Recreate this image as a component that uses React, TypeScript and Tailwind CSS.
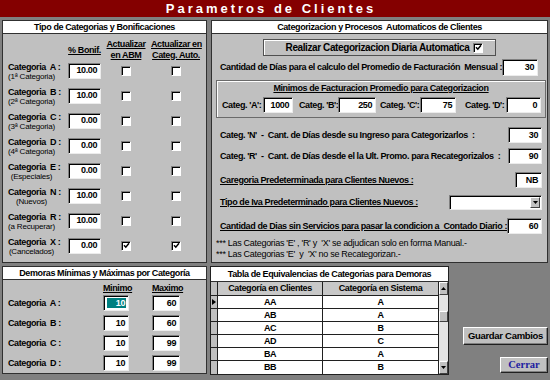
import React from "react";

const categorias = [
  { letra: "A", sub: "(1ª Categoria)", bonif: "10.00", abm: false, auto: false },
  { letra: "B", sub: "(2ª Categoria)", bonif: "10.00", abm: false, auto: false },
  { letra: "C", sub: "(3ª Categoria)", bonif: "0.00", abm: false, auto: false },
  { letra: "D", sub: "(4ª Categoria)", bonif: "0.00", abm: false, auto: false },
  { letra: "E", sub: "(Especiales)", bonif: "0.00", abm: false, auto: false },
  { letra: "N", sub: "(Nuevos)", bonif: "10.00", abm: false, auto: false },
  { letra: "R", sub: "(a Recuperar)", bonif: "10.00", abm: false, auto: false },
  { letra: "X", sub: "(Cancelados)", bonif: "0.00", abm: true, auto: true },
];

const demoras = [
  { letra: "A", min: "10", max: "60" },
  { letra: "B", min: "10", max: "60" },
  { letra: "C", min: "10", max: "99" },
  { letra: "D", min: "10", max: "99" },
];

const equivalencias = [
  ["AA", "A"],
  ["AB", "A"],
  ["AC", "B"],
  ["AD", "C"],
  ["BA", "A"],
  ["BB", "B"],
];

const Box = ({ value, className = "" }: { value?: string; className?: string }) => (
  <div
    className={`flex items-center justify-end bg-white border border-t-[#808080] border-l-[#808080] border-r-[#ececec] border-b-[#ececec] shadow-[inset_1px_1px_0_#000] pr-[3px] font-bold leading-none ${className}`}
  >
    {value}
  </div>
);

const Check = ({ checked }: { checked?: boolean }) => (
  <div className="w-[10px] h-[10px] bg-white border border-t-[#808080] border-l-[#808080] border-r-white border-b-white shadow-[inset_1px_1px_0_#000] flex items-center justify-center">
    {checked && (
      <svg width="7" height="7" viewBox="0 0 7 7">
        <path d="M1 3.2 L2.8 5.2 L6 1.2" stroke="#000" strokeWidth="1.5" fill="none" />
      </svg>
    )}
  </div>
);

const PanelHeader = ({ children, className = "h-[13px]" }: { children: React.ReactNode; className?: string }) => (
  <div className={`bg-white border-b border-[#303030] flex items-center justify-center font-bold leading-none whitespace-pre ${className}`}>
    {children}
  </div>
);

export default function App() {
  return (
    <div className="w-[550px] h-[380px] bg-[#808080] overflow-hidden text-black text-[9px] tracking-[-0.4px] font-['Liberation_Sans',Arial,sans-serif]">
      {/* Barra de titulo */}
      <div className="h-[17px] bg-[#840000] flex items-center justify-center pr-[8px]">
        <span className="text-white font-bold text-[13px] tracking-[3px] leading-none">Parametros de Clientes</span>
      </div>

      <div className="flex gap-[4px] pt-[3px] pl-[2px]">
        {/* Tipo de Categorias */}
        <section className="w-[205px] h-[243px] bg-[#c0c0c0] border border-[#303030] flex flex-col">
          <PanelHeader>Tipo de Categorias y Bonificaciones</PanelHeader>
          <div className="flex h-[24px] pt-[5px] font-bold leading-[10.5px] whitespace-nowrap">
            <div className="w-[63px]" />
            <div className="w-[33px] ml-[2px] text-center underline mt-[6px]">% Bonif.</div>
            <div className="w-[50px] text-center underline">
              Actualizar
              <br />
              en ABM
            </div>
            <div className="w-[50px] text-center underline">
              Actualizar en
              <br />
              Categ. Auto.
            </div>
          </div>
          {categorias.map((c) => (
            <div key={c.letra} className="flex items-center h-[25px]">
              <div className="w-[63px] pl-[5px] pt-[2px]">
                <div className="font-bold leading-[10px] whitespace-pre">{`Categoria  ${c.letra} :`}</div>
                <div className="w-[47px] text-center text-[8px] tracking-[-0.2px] leading-[9px] whitespace-nowrap">{c.sub}</div>
              </div>
              <Box value={c.bonif} className="w-[33px] h-[16px] ml-[2px]" />
              <div className="w-[50px] flex justify-center">
                <Check checked={c.abm} />
              </div>
              <div className="w-[50px] flex justify-center">
                <Check checked={c.auto} />
              </div>
            </div>
          ))}
        </section>

        {/* Categorizacion y procesos */}
        <section className="w-[337px] h-[243px] bg-[#c0c0c0] border border-[#303030] flex flex-col font-bold leading-none whitespace-nowrap">
          <PanelHeader>Categorizacion y Procesos  Automaticos de Clientes</PanelHeader>

          <div className="self-center w-[233px] h-[17px] mt-[5px] border border-[#505050] shadow-[inset_1px_1px_0_#fff] flex items-center justify-center gap-[4px] pl-[10px] text-[10px]">
            <span>Realizar Categorizacion Diaria Automatica</span>
            <Check checked />
          </div>

          <div className="flex items-center justify-between h-[17px] mt-[3px] pl-[8px] pr-[9px]">
            <span className="whitespace-pre">Cantidad de Días para el calculo del Promedio de Facturación  Mensual :</span>
            <Box value="30" className="w-[36px] h-[17px]" />
          </div>

          <div className="h-[38px] mt-[4px] ml-[4px] mr-[1px] border border-[#6a6a6a] shadow-[inset_1px_1px_0_#fff] flex flex-col">
            <div className="text-center underline leading-[10px] pt-[2px]">Minimos de Facturacion Promedio para Categorizacion</div>
            <div className="flex items-center h-[16px] mt-[4px] pl-[5px]">
              <span className="w-[40px]">Categ. 'A':</span>
              <Box value="1000" className="w-[30px] h-[16px] ml-[1px]" />
              <span className="w-[39px] ml-[6px]">Categ. 'B':</span>
              <Box value="250" className="w-[38px] h-[16px]" />
              <span className="w-[40px] ml-[4px]">Categ. 'C':</span>
              <Box value="75" className="w-[36px] h-[16px]" />
              <span className="w-[40px] ml-[9px]">Categ. 'D':</span>
              <Box value="0" className="w-[35px] h-[16px] ml-[1px]" />
            </div>
          </div>

          <div className="flex items-center justify-between h-[16px] mt-[9px] pl-[8px] pr-[5px]">
            <span className="whitespace-pre">Categ. 'N'  -  Cant. de Días desde su Ingreso para Categorizarlos  :</span>
            <Box value="30" className="w-[34px] h-[16px]" />
          </div>
          <div className="flex items-center justify-between h-[16px] mt-[5px] pl-[8px] pr-[5px]">
            <span className="whitespace-pre">Categ. 'R'  -  Cant. de Días desde el la Ult. Promo. para Recategorizalos  :</span>
            <Box value="90" className="w-[34px] h-[16px]" />
          </div>
          <div className="flex items-center justify-between h-[16px] mt-[8px] pl-[8px] pr-[5px]">
            <span className="underline">Caregoria Predeterminada para Clientes Nuevos :</span>
            <Box value="NB" className="w-[27px] h-[16px]" />
          </div>
          <div className="flex items-center justify-between h-[15px] mt-[7px] pl-[8px] pr-[5px]">
            <span className="underline">Tipo de Iva Predeterminado para Clientes Nuevos :</span>
            <div className="w-[93px] h-[15px] bg-white border border-t-[#808080] border-l-[#808080] border-r-[#ececec] border-b-[#ececec] shadow-[inset_1px_1px_0_#000] flex justify-end p-[1px]">
              <div className="w-[10px] h-full bg-[#c0c0c0] border border-t-white border-l-white border-r-[#404040] border-b-[#404040] flex items-center justify-center">
                <svg width="5" height="3" viewBox="0 0 5 3">
                  <path d="M0 0 H5 L2.5 3 Z" fill="#000" />
                </svg>
              </div>
            </div>
          </div>
          <div className="flex items-center justify-between h-[16px] mt-[8px] pl-[8px] pr-[5px]">
            <span className="underline whitespace-pre">Cantidad de Dias sin Servicios para pasar la condicion a  Contado Diario :</span>
            <Box value="60" className="w-[35px] h-[16px]" />
          </div>

          <div className="mt-[4px] pl-[4px] font-normal tracking-[-0.3px] leading-[11px] whitespace-pre">
            <div>*** Las Categorias 'E' , 'R' y  'X' se adjudican solo en forma Manual.-</div>
            <div>*** Las Categorias 'E'  y  'X' no se Recategorizan.-</div>
          </div>
        </section>
      </div>

      <div className="flex pt-[3px] pl-[2px] pr-[2px]">
        {/* Demoras */}
        <section className="w-[205px] h-[108px] bg-[#c0c0c0] border border-[#303030] flex flex-col font-bold leading-none whitespace-nowrap">
          <PanelHeader>Demoras Mínimas y Máximas por Categoría</PanelHeader>
          <div className="flex items-end h-[13px]">
            <div className="w-[100px]" />
            <div className="w-[26px] text-center underline">Minimo</div>
            <div className="w-[28px] ml-[23px] text-center underline">Maximo</div>
          </div>
          {demoras.map((d, i) => (
            <div key={d.letra} className="flex items-center h-[20px]">
              <div className="w-[100px] pl-[5px] whitespace-pre">{`Categoria  ${d.letra} :`}</div>
              {i === 0 ? (
                <div className="w-[26px] h-[16px] bg-white border border-t-[#808080] border-l-[#808080] border-r-[#ececec] border-b-[#ececec] shadow-[inset_1px_1px_0_#000] p-[2px] pl-[3px]">
                  <div className="w-full h-full bg-[#008080] text-white flex items-center justify-end pr-[1px]">{d.min}</div>
                </div>
              ) : (
                <Box value={d.min} className="w-[26px] h-[16px]" />
              )}
              <Box value={d.max} className="w-[28px] h-[16px] ml-[23px]" />
            </div>
          ))}
        </section>

        {/* Tabla de equivalencias */}
        <section className="w-[239px] h-[109px] ml-[3px] bg-[#c0c0c0] border border-[#202020] flex flex-col font-bold leading-none whitespace-nowrap">
          <PanelHeader className="h-[15px]">Tabla de Equivalencias de Categorias para Demoras</PanelHeader>
          <div className="flex flex-1">
            <div className="flex flex-col">
              <div className="flex h-[14px] border-b border-[#202020]">
                <div className="w-[7px] bg-[#c0c0c0] border-r border-[#202020]" />
                <div className="w-[105px] bg-[#c8c8c8] border-r border-[#202020] flex items-center justify-center">Categoría en Clientes</div>
                <div className="w-[115px] bg-[#c8c8c8] flex items-center justify-center">Categoría en Sistema</div>
              </div>
              {equivalencias.map(([cli, sis], i) => (
                <div key={cli} className="flex h-[13px] border-b border-[#202020] last:border-b-0">
                  <div className="w-[7px] bg-[#c0c0c0] border-r border-[#202020] flex items-center justify-center">
                    {i === 0 && (
                      <svg width="4" height="6" viewBox="0 0 4 6">
                        <path d="M0 0 L4 3 L0 6 Z" fill="#000" />
                      </svg>
                    )}
                  </div>
                  <div className="w-[105px] bg-white border-r border-[#202020] flex items-center justify-center">{cli}</div>
                  <div className="w-[115px] bg-white flex items-center justify-center">{sis}</div>
                </div>
              ))}
            </div>
            {/* Scrollbar */}
            <div className="w-[10px] flex flex-col bg-[#e4e4e4] border-l border-[#202020]">
              <div className="h-[13px] bg-[#c0c0c0] border border-t-white border-l-white border-r-[#404040] border-b-[#404040] flex items-center justify-center">
                <svg width="5" height="3" viewBox="0 0 5 3">
                  <path d="M0 3 H5 L2.5 0 Z" fill="#000" />
                </svg>
              </div>
              <div className="flex-1 flex flex-col pt-[16px]">
                <div className="h-[11px] bg-[#c0c0c0] border border-t-white border-l-white border-r-[#404040] border-b-[#404040]" />
              </div>
              <div className="h-[13px] bg-[#c0c0c0] border border-t-white border-l-white border-r-[#404040] border-b-[#404040] flex items-center justify-center">
                <svg width="5" height="3" viewBox="0 0 5 3">
                  <path d="M0 0 H5 L2.5 3 Z" fill="#000" />
                </svg>
              </div>
            </div>
          </div>
        </section>

        {/* Botones */}
        <div className="flex flex-col items-end ml-auto">
          <button className="mt-[61px] w-[85px] h-[18px] bg-[#c0c0c0] border border-t-white border-l-white border-r-[#202020] border-b-[#202020] shadow-[inset_-1px_-1px_0_#808080] text-[9.5px] tracking-[-0.3px] font-bold leading-none whitespace-nowrap">
            Guardar Cambios
          </button>
          <button className="mt-[12px] w-[48px] h-[16px] bg-[#c0c0c0] border border-t-white border-l-white border-r-[#202020] border-b-[#202020] shadow-[inset_-1px_-1px_0_#808080] text-[10.5px] tracking-normal font-bold leading-none text-[#1c1ca0] font-['Liberation_Serif',serif]">
            Cerrar
          </button>
        </div>
      </div>
    </div>
  );
}
